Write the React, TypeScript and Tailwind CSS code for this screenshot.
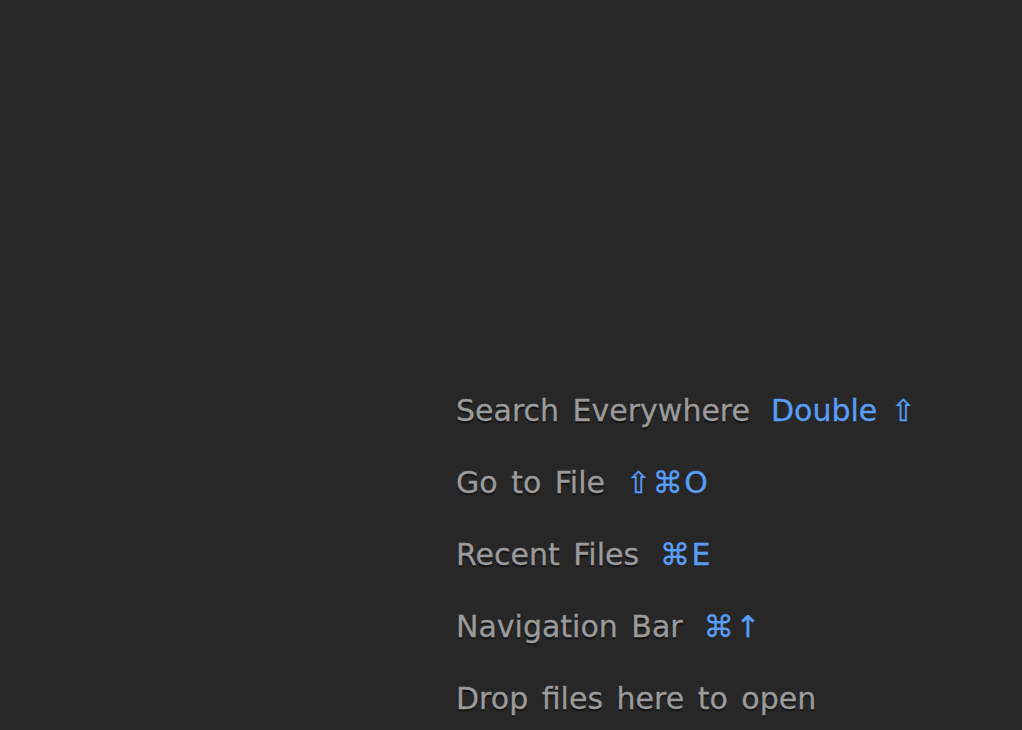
const rows = [
  { label: "Search Everywhere", keys: "Double ⇧", wide: false },
  { label: "Go to File", keys: "⇧⌘O", wide: true },
  { label: "Recent Files", keys: "⌘E", wide: true },
  { label: "Navigation Bar", keys: "⌘↑", wide: true },
  { label: "Drop files here to open", keys: "", wide: false },
]

export default function App() {
  return (
    <div className="w-[1022px] h-[730px] overflow-hidden bg-[#272727] font-['DejaVu_Sans',sans-serif] text-[30px] [word-spacing:4px]">
      <div className="pl-[456px] pt-[388px] flex flex-col gap-[28px]">
        {rows.map((row) => (
          <div key={row.label} className="flex items-center h-[44px] gap-[21px] whitespace-nowrap">
            <span className="text-[#9b9b9b] [text-shadow:0_2px_1px_#111] [-webkit-text-stroke:0.3px_#9b9b9b]">{row.label}</span>
            {row.keys && (
              <span
                className={
                  row.wide
                    ? "text-[#589df6] tracking-[1.5px] [-webkit-text-stroke:0.3px_#589df6]"
                    : "text-[#589df6] [-webkit-text-stroke:0.3px_#589df6]"
                }
              >
                {row.keys}
              </span>
            )}
          </div>
        ))}
      </div>
    </div>
  )
}
